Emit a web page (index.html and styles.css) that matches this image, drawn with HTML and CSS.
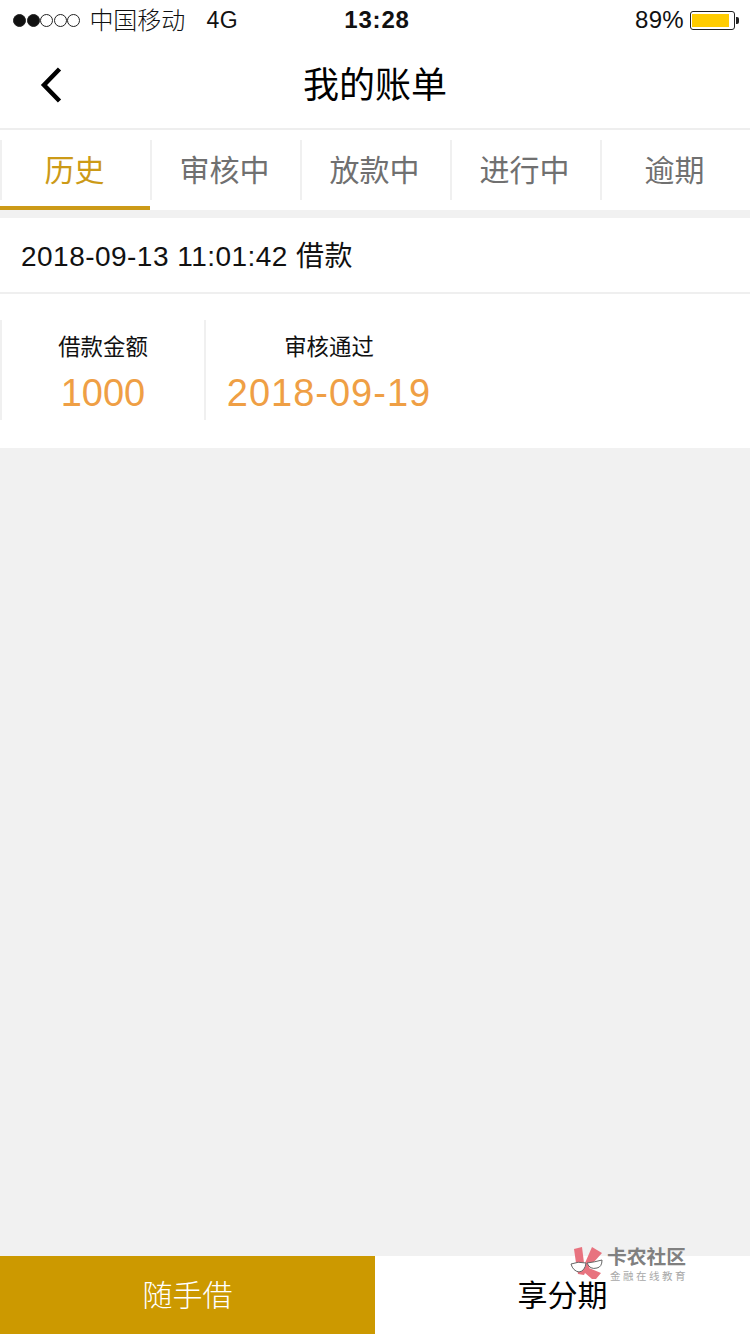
FILE: index.html
```html
<!DOCTYPE html>
<html lang="zh-CN">
<head>
<meta charset="utf-8">
<title>我的账单</title>
<link rel="stylesheet" href="styles.css">
</head>
<body>
<div class="page">
  <header class="status">
    <div class="status-left">
      <span class="signal"><i class="dot on"></i><i class="dot on"></i><i class="dot"></i><i class="dot"></i><i class="dot"></i></span>
      <span class="carrier">中国移动</span>
      <span class="net">4G</span>
    </div>
    <div class="clock">13:28</div>
    <div class="status-right">
      <span class="pct">89%</span>
      <span class="battery"><span class="battery-fill"></span></span>
      <span class="battery-tip"></span>
    </div>
  </header>
  <nav class="navbar">
    <svg class="back" width="24" height="38" viewBox="0 0 24 38"><path d="M20.500 3 L5 19 L20.500 35" fill="none" stroke="#000" stroke-width="4.500"/></svg>
    <h1 class="title">我的账单</h1>
  </nav>
  <div class="tabs">
    <div class="tab active"><span class="tab-label">历史</span></div>
    <div class="tab"><span class="tab-label">审核中</span></div>
    <div class="tab"><span class="tab-label">放款中</span></div>
    <div class="tab"><span class="tab-label">进行中</span></div>
    <div class="tab"><span class="tab-label">逾期</span></div>
  </div>
  <section class="bill">
    <div class="bill-head">2018-09-13 11:01:42 借款</div>
    <div class="bill-body">
      <div class="cell cell-amount">
        <div class="cell-label">借款金额</div>
        <div class="cell-value">1000</div>
      </div>
      <div class="cell cell-date">
        <div class="cell-label">审核通过</div>
        <div class="cell-value">2018-09-19</div>
      </div>
    </div>
  </section>
  <div class="spacer"></div>
  <footer class="bottom">
    <div class="btn btn-primary">随手借</div>
    <div class="btn btn-plain">享分期</div>
  </footer>
  <div class="watermark">
    <svg class="wm-logo" width="42" height="42" viewBox="0 0 42 42">
      <path d="M9 9 L17 7 L19 23 L20 23 L27 7 L37 13 L28 23 L24 28 L36 33 L31 39 L27 39 L20 33 L19 35 L13 34 L11 23 Z" fill="#e8737f"/>
      <path d="M6 24 Q13 21 21 23 Q20 31 14 32 Q8 31 6 24 Z M22 23 Q30 22 37 20 Q37 27 32 28 Q25 30 22 23 Z" fill="#fff" stroke="#666" stroke-width="1"/>
    </svg>
    <div class="wm-text">
      <div class="wm-big">卡农社区</div>
      <div class="wm-small">金融在线教育</div>
    </div>
  </div>
</div>
</body>
</html>
```

FILE: styles.css
```css
* { box-sizing: border-box; }
html, body { margin: 0; padding: 0; }
body {
  font-family: "Liberation Sans", "Noto Sans CJK SC", sans-serif;
  color: #000;
  background: #f1f1f1;
}
.page {
  position: relative;
  width: 750px;
  height: 1334px;
  display: flex;
  flex-direction: column;
  overflow: hidden;
}
.status {
  height: 40px;
  flex: none;
  background: #fff;
  display: grid;
  grid-template-columns: 1fr auto 1fr;
  align-items: center;
  padding: 0 11px 0 13px;
  font-size: 24px;
  color: #111;
}
.status-left { display: flex; align-items: center; }
.signal { display: flex; gap: 0.600px; margin-right: 9px; }
.dot {
  width: 13px;
  height: 13px;
  border-radius: 50%;
  border: 1px solid #222;
  display: block;
}
.dot.on { background: #111; }
.carrier { font-size: 24px; font-weight: 300; padding-bottom: 3px; }
.net { margin-left: 21px; font-size: 23px; letter-spacing: 0.500px; }
.clock { font-weight: 700; font-size: 24px; letter-spacing: 0.800px; margin-left: 2px; }
.status-right { display: flex; align-items: center; justify-content: flex-end; }
.pct { margin-right: 6px; font-size: 24px; letter-spacing: 0.300px; }
.battery {
  width: 45px;
  height: 19px;
  border: 1px solid #222;
  border-radius: 3px;
  padding: 2px 1px;
  display: block;
}
.battery-fill { display: block; width: 37px; height: 13px; background: #ffcc00; }
.battery-tip { width: 3px; height: 7px; background: #222; margin-left: 1px; border-radius: 0 2px 2px 0; }
.navbar {
  position: relative;
  height: 90px;
  flex: none;
  background: #fff;
  display: flex;
  align-items: center;
  justify-content: center;
  border-bottom: 2px solid #eeeeee;
  padding-bottom: 5px;
}
.back { position: absolute; left: 39px; top: 26px; }
.title {
  margin: 0;
  font-family: "Noto Sans CJK SC", sans-serif;
  font-weight: 400;
  font-size: 36px;
  line-height: 50px;
}
.tabs {
  flex: none;
  height: 80px;
  background: #fff;
  display: flex;
}
.tab {
  width: 150px;
  height: 80px;
  padding-top: 10px;
  display: flex;
  font-family: "Noto Sans CJK SC", sans-serif;
  font-size: 30px;
  font-weight: 400;
  color: #707070;
}
.tab-label {
  flex: 1;
  display: flex;
  align-items: center;
  justify-content: center;
  height: 60px;
  border-left: 2px solid #f0f0f0;
  padding: 0 3px 4px 0;
}
.tab.active { color: #cc9a17; border-bottom: 4px solid #cc9a17; }
.bill {
  flex: none;
  margin-top: 8px;
  background: #fff;
}
.bill-head {
  height: 76px;
  padding: 0 0 3px 21px;
  display: flex;
  align-items: center;
  border-bottom: 2px solid #efefef;
  font-size: 28px;
  letter-spacing: 0.470px;
  color: #111;
}
.bill-body {
  display: flex;
  padding: 26px 0 28px;
}
.cell {
  height: 100px;
  border-left: 2px solid #f0f0f0;
  display: flex;
  flex-direction: column;
  align-items: center;
}
.cell-amount { width: 204px; }
.cell-date { width: 248px; }
.cell-date .cell-value { letter-spacing: 1px; }
.cell-label {
  font-family: "Noto Sans CJK SC", sans-serif;
  font-size: 22.400px;
  font-weight: 400;
  line-height: 32px;
  margin-top: 9px;
  color: #111;
}
.cell-value {
  font-size: 38px;
  line-height: 44px;
  margin-top: 10px;
  color: #ef9f45;
}
.spacer { flex: 1; }
.bottom {
  flex: none;
  height: 78px;
  display: flex;
}
.btn {
  width: 375px;
  display: flex;
  align-items: center;
  justify-content: center;
  padding-bottom: 4px;
  font-family: "Noto Sans CJK SC", sans-serif;
  font-size: 30px;
  font-weight: 300;
}
.btn-primary { background: #cc9900; color: #fff; }
.btn-plain { background: #fff; color: #000; font-weight: 400; }
.watermark {
  position: absolute;
  left: 565px;
  top: 1240px;
  display: flex;
}
.wm-text { padding-top: 7px; }
.wm-big {
  font-family: "Liberation Sans", "Noto Sans CJK SC", sans-serif;
  font-size: 19.750px;
  font-weight: 700;
  line-height: 20px;
  color: #808080;
  white-space: nowrap;
}
.wm-small {
  font-family: "Liberation Sans", "Noto Sans CJK SC", sans-serif;
  font-size: 10.500px;
  letter-spacing: 2.500px;
  line-height: 14px;
  margin: 2px 0 0 3px;
  color: #a8a8a8;
  white-space: nowrap;
}
```
